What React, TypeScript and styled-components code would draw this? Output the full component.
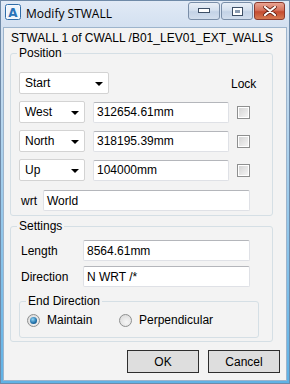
import React from 'react';
import styled, { createGlobalStyle } from 'styled-components';

const GlobalStyle = createGlobalStyle`
  html, body {
    margin: 0;
    padding: 0;
    background: #ffffff;
  }
  body {
    font-family: "Liberation Sans", Arial, sans-serif;
    font-size: 12px;
    color: #000;
  }
  #root {
    width: 290px;
    height: 384px;
  }
`;

const Window = styled.div`
  box-sizing: border-box;
  width: 290px;
  height: 384px;
  display: flex;
  flex-direction: column;
  border: 1px solid #6f8aa8;
  background: linear-gradient(to bottom, #dde8f5 0px, #d4e1f0 30px, #5fb2e6 100%);
`;

const TitleBar = styled.div`
  height: 26px;
  flex: none;
  display: flex;
  align-items: flex-start;
  background: linear-gradient(to bottom, #e1eaf6, #d3e0f0);
`;

const AppIcon = styled.svg`
  margin: 3px 0 0 4px;
  flex: none;
`;

const Title = styled.div`
  margin: 5px 0 0 5px;
  font-family: "Open Sans", "Noto Sans", sans-serif;
  font-size: 12px;
  line-height: 16px;
  color: #000;
  flex: 1;
`;

const CaptionButtons = styled.div`
  display: flex;
  gap: 1px;
  margin: 1px 4px 0 0;
`;

const CaptionButton = styled.div<{ $close?: boolean }>`
  box-sizing: border-box;
  width: ${(p) => (p.$close ? 31 : 32)}px;
  height: 18px;
  display: flex;
  align-items: center;
  justify-content: center;
  border: 1px solid ${(p) => (p.$close ? '#8c3a2e' : '#7a8ea8')};
  border-radius: 3px;
  background: ${(p) =>
    p.$close
      ? 'linear-gradient(to bottom, #e8a493 0%, #d6735d 45%, #c44b30 55%, #d67a52 100%)'
      : 'linear-gradient(to bottom, #e9eff7 0%, #d5e0ee 45%, #c3d2e6 55%, #d2deed 100%)'};
`;

const Client = styled.div`
  flex: 1;
  margin: 0 2px 2px 2px;
  border: 1px solid #9db4cc;
  background: #f3f3f3;
  padding: 3px 6px 0 6px;
  display: flex;
  flex-direction: column;
`;

const Header = styled.div`
  line-height: 14px;
  padding-left: 1px;
`;

const Group = styled.fieldset<{ $width: number; $top: number; $bottom: number; $left?: number }>`
  box-sizing: border-box;
  width: ${(p) => p.$width}px;
  margin: ${(p) => p.$top}px 0 0 ${(p) => p.$left ?? 0}px;
  padding: 0 0 ${(p) => p.$bottom}px 0;
  border: 1px solid #d5dfe5;
  border-radius: 3px;
  min-width: 0;
`;

const Legend = styled.legend`
  margin-left: 6px;
  padding: 0 2px;
  line-height: 14px;
  font-size: 12px;
`;

const PositionGrid = styled.div`
  display: grid;
  grid-template-columns: 66px 136px 26px;
  column-gap: 8px;
  row-gap: 7px;
  grid-auto-rows: 22px;
  padding: 12px 0 0 8px;
  align-items: center;
`;

const Combo = styled.div<{ $width: number; $span?: number }>`
  box-sizing: border-box;
  width: ${(p) => p.$width}px;
  height: 22px;
  display: flex;
  align-items: center;
  justify-content: space-between;
  padding: 0 5px 0 5px;
  background: #fff;
  border: 1px solid #d3d3d3;
  border-radius: 2px;
  grid-column: span ${(p) => p.$span ?? 1};
`;

const Arrow = styled.span`
  width: 0;
  height: 0;
  border-left: 4px solid transparent;
  border-right: 4px solid transparent;
  border-top: 4px solid #000;
  margin-top: 1px;
`;

const Field = styled.div<{ $width: number; $height?: number }>`
  box-sizing: border-box;
  width: ${(p) => p.$width}px;
  height: ${(p) => p.$height ?? 21}px;
  display: flex;
  align-items: center;
  padding-left: 3px;
  background: #fff;
  border: 1px solid #dfe1e6;
  border-top-color: #b4b6bb;
  border-radius: 2px;
`;

const LockLabel = styled.div`
  align-self: end;
  justify-self: start;
  line-height: 14px;
  margin-bottom: 3px;
  margin-left: -6px;
`;

const CheckCell = styled.div`
  display: flex;
  justify-content: flex-start;
`;

const CheckBox = styled.div`
  box-sizing: border-box;
  width: 13px;
  height: 13px;
  border: 1px solid #8e8f8f;
  background: #fff;
  padding: 1px;
  &::after {
    content: '';
    display: block;
    width: 100%;
    height: 100%;
    background: linear-gradient(135deg, #d4d4d4, #f4f4f4);
  }
`;

const Row = styled.div<{ $top: number }>`
  display: flex;
  align-items: center;
  margin-top: ${(p) => p.$top}px;
  padding-left: 10px;
`;

const Label = styled.div<{ $width: number }>`
  width: ${(p) => p.$width}px;
  flex: none;
`;

const RadioRow = styled.div`
  display: flex;
  align-items: center;
  padding: 5px 0 0 7px;
  height: 14px;
`;

const RadioItem = styled.div<{ $width?: number }>`
  display: flex;
  align-items: center;
  gap: 7px;
  width: ${(p) => (p.$width ? `${p.$width}px` : 'auto')};
`;

const Radio = styled.div<{ $checked?: boolean }>`
  box-sizing: border-box;
  width: 13px;
  height: 13px;
  border-radius: 50%;
  border: 1px solid #8e8f8f;
  background: radial-gradient(circle at 60% 65%, #f6f6f6, #d6d6d6);
  display: flex;
  align-items: center;
  justify-content: center;
  &::after {
    content: '';
    display: ${(p) => (p.$checked ? 'block' : 'none')};
    width: 7px;
    height: 7px;
    border-radius: 50%;
    background: radial-gradient(circle at 40% 35%, #8fd4f5, #1f6fa8 60%, #0d3f6e);
  }
`;

const ButtonBar = styled.div`
  display: flex;
  justify-content: flex-end;
  gap: 9px;
  margin-top: 8px;
`;

const Button = styled.div`
  box-sizing: border-box;
  width: 72px;
  height: 23px;
  display: flex;
  align-items: center;
  justify-content: center;
  background: #dedede;
  border: 1px solid #2e2e2e;
`;

const ComboRow = ({ value, field }: { value: string; field: string }) => (
  <>
    <Combo $width={66}>
      <span>{value}</span>
      <Arrow />
    </Combo>
    <Field $width={136}>{field}</Field>
    <CheckCell>
      <CheckBox />
    </CheckCell>
  </>
);

export default function App() {
  return (
    <>
      <GlobalStyle />
      <Window>
        <TitleBar>
          <AppIcon width="16" height="16" viewBox="0 0 16 16">
            <rect x="0.5" y="0.5" width="15" height="15" rx="2" fill="#ffffff" stroke="#2f6ca8" />
            <rect x="1.5" y="1.5" width="13" height="13" rx="1" fill="#eef4fb" />
            <text x="8" y="13" textAnchor="middle" fontFamily="DejaVu Sans, sans-serif" fontWeight="bold" fontSize="12" fill="#2a73b8">
              A
            </text>
          </AppIcon>
          <Title>Modify STWALL</Title>
          <CaptionButtons>
            <CaptionButton>
              <svg width="12" height="6" viewBox="0 0 12 6">
                <rect x="0.5" y="0.5" width="11" height="4" fill="#ffffff" stroke="#3d4f66" />
              </svg>
            </CaptionButton>
            <CaptionButton>
              <svg width="11" height="9" viewBox="0 0 11 9">
                <rect x="0.5" y="0.5" width="10" height="8" fill="#ffffff" stroke="#3d4f66" />
                <rect x="3" y="3" width="5" height="3" fill="#8a9bb0" />
              </svg>
            </CaptionButton>
            <CaptionButton $close>
              <svg width="14" height="10" viewBox="0 0 14 10">
                <path d="M2 1 L12 9 M12 1 L2 9" stroke="#5a1d12" strokeWidth="3.6" strokeLinecap="round" />
                <path d="M2 1 L12 9 M12 1 L2 9" stroke="#ffffff" strokeWidth="2.2" strokeLinecap="round" />
              </svg>
            </CaptionButton>
          </CaptionButtons>
        </TitleBar>
        <Client>
          <Header>STWALL 1 of CWALL /B01_LEV01_EXT_WALLS</Header>
          <Group $width={263} $top={1} $bottom={4}>
            <Legend>Position</Legend>
            <PositionGrid>
              <Combo $width={90} $span={2}>
                <span>Start</span>
                <Arrow />
              </Combo>
              <LockLabel>Lock</LockLabel>
              <ComboRow value="West" field="312654.61mm" />
              <ComboRow value="North" field="318195.39mm" />
              <ComboRow value="Up" field="104000mm" />
            </PositionGrid>
            <Row $top={9}>
              <Label $width={22}>wrt</Label>
              <Field $width={207}>World</Field>
            </Row>
          </Group>
          <Group $width={263} $top={3} $bottom={3}>
            <Legend>Settings</Legend>
            <Row $top={7}>
              <Label $width={62}>Length</Label>
              <Field $width={167}>8564.61mm</Field>
            </Row>
            <Row $top={5}>
              <Label $width={62}>Direction</Label>
              <Field $width={167}>N WRT /*</Field>
            </Row>
            <Group $width={240} $top={7} $bottom={10} $left={8}>
              <Legend>End Direction</Legend>
              <RadioRow>
                <RadioItem $width={92}>
                  <Radio $checked />
                  <span>Maintain</span>
                </RadioItem>
                <RadioItem>
                  <Radio />
                  <span>Perpendicular</span>
                </RadioItem>
              </RadioRow>
            </Group>
          </Group>
          <ButtonBar>
            <Button>OK</Button>
            <Button>Cancel</Button>
          </ButtonBar>
        </Client>
      </Window>
    </>
  );
}
